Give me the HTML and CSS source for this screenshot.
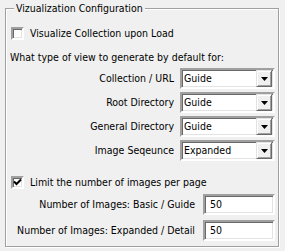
FILE: index.html
```html
<!DOCTYPE html>
<html>
<head>
<meta charset="utf-8">
<link rel="stylesheet" href="styles.css">
</head>
<body>
<fieldset class="group">
  <legend class="caption">Vizualization Configuration</legend>
  <label class="check-row"><span class="checkbox"></span><span>Visualize Collection upon Load</span></label>
  <p class="intro">What type of view to generate by default for:</p>
  <div class="combo-grid">
    <span class="label">Collection / URL</span>
    <div class="combo"><span class="value">Guide</span><span class="drop"><svg width="7" height="4" viewBox="0 0 7 4"><path d="M0 0h7L3.5 4z" fill="#000"/></svg></span></div>
    <span class="label">Root Directory</span>
    <div class="combo"><span class="value">Guide</span><span class="drop"><svg width="7" height="4" viewBox="0 0 7 4"><path d="M0 0h7L3.5 4z" fill="#000"/></svg></span></div>
    <span class="label">General Directory</span>
    <div class="combo"><span class="value">Guide</span><span class="drop"><svg width="7" height="4" viewBox="0 0 7 4"><path d="M0 0h7L3.5 4z" fill="#000"/></svg></span></div>
    <span class="label">Image Seqeunce</span>
    <div class="combo"><span class="value">Expanded</span><span class="drop"><svg width="7" height="4" viewBox="0 0 7 4"><path d="M0 0h7L3.5 4z" fill="#000"/></svg></span></div>
  </div>
  <label class="check-row limit"><span class="checkbox"><svg width="9" height="9" viewBox="0 0 9 9"><path d="M1 3.5l2.5 2.5L8 1.5" stroke="#000" stroke-width="2" fill="none"/></svg></span><span>Limit the number of images per page</span></label>
  <div class="input-grid">
    <span class="label">Number of Images: Basic / Guide</span>
    <div class="textbox">50</div>
    <span class="label">Number of Images: Expanded / Detail</span>
    <div class="textbox">50</div>
  </div>
</fieldset>
</body>
</html>
```
FILE: styles.css
```css
html, body {
  margin: 0;
  padding: 0;
  background: #f0f0f0;
}
body {
  width: 285px;
  height: 251px;
  overflow: hidden;
  font-family: "DejaVu Sans Condensed", "DejaVu Sans", sans-serif;
  font-stretch: condensed;
  font-size: 10.5px;
  line-height: 13px;
  color: #000;
}
.group {
  box-sizing: border-box;
  width: 274px;
  margin: 2px 0 0 5px;
  padding: 12px 3px 5px 5px;
  border: 1px solid #a0a0a0;
  box-shadow: 1px 1px 0 #fff, inset 1px 1px 0 #fff;
  min-width: 0;
}
.caption {
  margin-left: 3px;
  padding: 0 2px;
  background: #f0f0f0;
  line-height: 13px;
}
.check-row {
  display: flex;
  align-items: center;
  gap: 6px;
  height: 13px;
}
.checkbox {
  box-sizing: border-box;
  width: 13px;
  height: 13px;
  flex: none;
  background: #fff;
  border-style: solid;
  border-width: 2px;
  border-color: #a0a0a0 #fff #fff #a0a0a0;
  box-shadow: inset 1px 1px 0 #696969, inset -1px -1px 0 #e3e3e3;
  display: flex;
  align-items: center;
  justify-content: center;
}
.intro {
  margin: 11px 0 0 -1px;
}
.combo-grid {
  display: grid;
  grid-template-columns: 1fr 95px;
  column-gap: 6px;
  row-gap: 3px;
  margin-top: 4px;
  align-items: center;
}
.label {
  text-align: right;
  white-space: nowrap;
}
.combo {
  box-sizing: border-box;
  height: 21px;
  display: flex;
  align-items: center;
  background: #fff;
  border-style: solid;
  border-width: 2px;
  border-color: #a0a0a0 #fff #fff #a0a0a0;
  box-shadow: inset 1px 1px 0 #696969, inset -1px -1px 0 #e3e3e3;
  padding: 1px 1px 1px 2px;
}
.value {
  flex: 1;
}
.drop {
  box-sizing: border-box;
  width: 16px;
  height: 17px;
  margin: -1px 0 -1px 0;
  background: #f0f0f0;
  border-style: solid;
  border-width: 1px;
  border-color: #e3e3e3 #696969 #696969 #e3e3e3;
  box-shadow: inset 1px 1px 0 #fff, inset -1px -1px 0 #a0a0a0;
  display: flex;
  align-items: center;
  justify-content: center;
}
.limit {
  margin-top: 15px;
}
.input-grid {
  display: grid;
  grid-template-columns: 1fr 72px;
  column-gap: 8px;
  row-gap: 5px;
  margin-top: 5px;
  align-items: center;
}
.textbox {
  box-sizing: border-box;
  height: 21px;
  background: #fff;
  border-style: solid;
  border-width: 2px;
  border-color: #a0a0a0 #fff #fff #a0a0a0;
  box-shadow: inset 1px 1px 0 #696969, inset -1px -1px 0 #e3e3e3;
  padding: 2px 5px;
  line-height: 13px;
}
```
